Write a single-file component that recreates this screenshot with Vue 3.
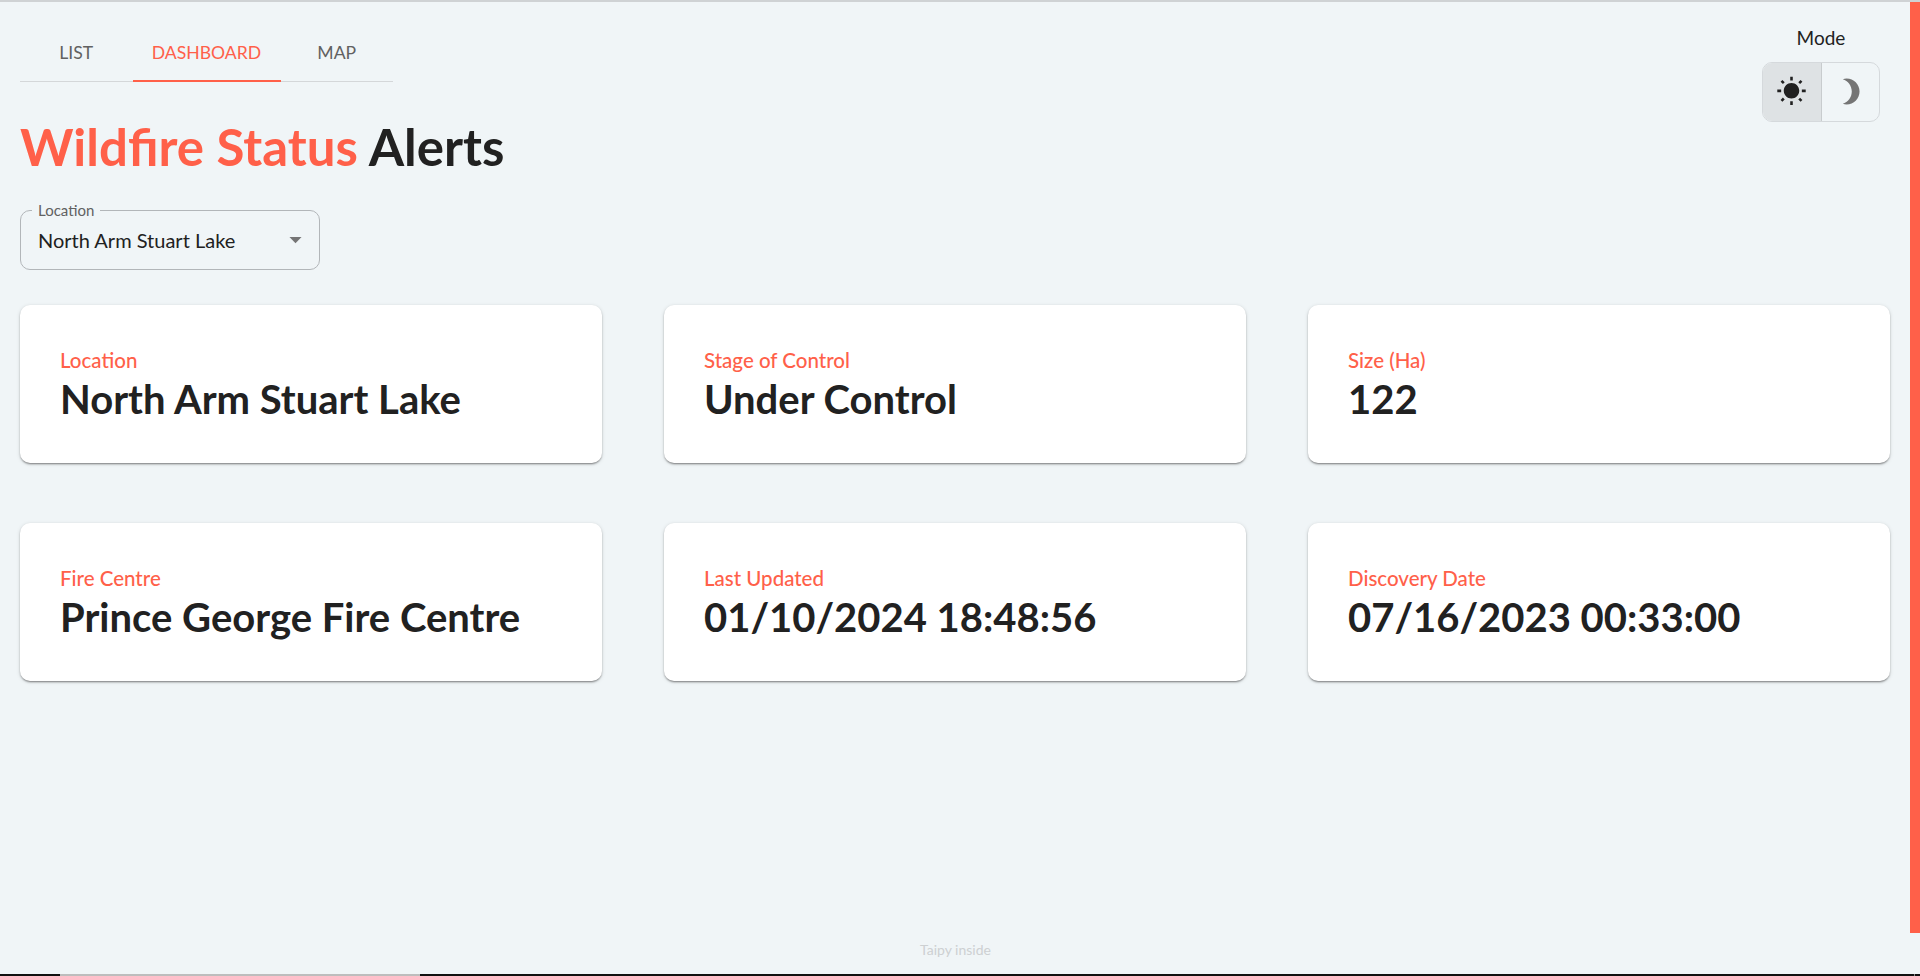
<script setup>
const tabs = [
  { label: 'LIST', active: false },
  { label: 'DASHBOARD', active: true },
  { label: 'MAP', active: false },
]

const cards = [
  { label: 'Location', value: 'North Arm Stuart Lake' },
  { label: 'Stage of Control', value: 'Under Control' },
  { label: 'Size (Ha)', value: '122' },
  { label: 'Fire Centre', value: 'Prince George Fire Centre' },
  { label: 'Last Updated', value: '01/10/2024 18:48:56' },
  { label: 'Discovery Date', value: '07/16/2023 00:33:00' },
]
</script>

<template>
  <div class="page">
    <div class="top-line"></div>

    <div class="mode">
      <span class="mode-label">Mode</span>
      <div class="mode-toggle">
        <button class="mode-btn selected">
          <svg width="31" height="31" viewBox="0 0 24 24" fill="#212121">
            <path d="M6.76 4.84l-1.8-1.79-1.41 1.41 1.79 1.79 1.42-1.41zM4 10.5H1v2h3v-2zm9-9.95h-2V3.5h2V.55zm7.45 3.91l-1.41-1.41-1.79 1.79 1.41 1.41 1.79-1.79zm-3.21 13.7l1.79 1.8 1.41-1.41-1.8-1.79-1.4 1.4zM20 10.5v2h3v-2h-3zm-8-5c-3.31 0-6 2.69-6 6s2.69 6 6 6 6-2.69 6-6-2.69-6-6-6zm-1 16.95h2V19.5h-2v2.95zm-7.45-3.91l1.41 1.41 1.79-1.8-1.41-1.41-1.79 1.8z" />
          </svg>
        </button>
        <button class="mode-btn">
          <svg width="31" height="31" viewBox="0 0 24 24" fill="#757575">
            <path d="M9 2c-1.05 0-2.05.16-3 .46 4.06 1.27 7 5.06 7 9.54 0 4.48-2.94 8.27-7 9.54.95.3 1.95.46 3 .46 5.52 0 10-4.48 10-10S14.52 2 9 2z" />
          </svg>
        </button>
      </div>
    </div>

    <div class="scroll-thumb"></div>

    <main class="content">
      <nav class="tabs">
        <a v-for="tab in tabs" :key="tab.label" class="tab" :class="{ active: tab.active }">{{ tab.label }}</a>
      </nav>

      <h1 class="title"><span class="accent">Wildfire Status</span> Alerts</h1>

      <fieldset class="select">
        <legend>Location</legend>
        <span class="select-value">North Arm Stuart Lake</span>
        <svg class="select-arrow" width="29" height="29" viewBox="0 0 24 24" fill="#757575">
          <path d="M7 10l5 5 5-5z" />
        </svg>
      </fieldset>

      <section class="grid">
        <div v-for="card in cards" :key="card.label" class="card">
          <div class="card-label">{{ card.label }}</div>
          <div class="card-value">{{ card.value }}</div>
        </div>
      </section>
    </main>

    <footer class="footer">Taipy inside</footer>

    <div class="bottom-bar">
      <div class="bottom-tab"></div>
      <div class="bottom-tick"></div>
    </div>
  </div>
</template>

<style>
html, body {
  margin: 0;
  background: #f0f5f7;
  overflow: hidden;
}
</style>

<style scoped>
.page {
  position: relative;
  width: 1920px;
  height: 976px;
  box-sizing: border-box;
  display: flex;
  flex-direction: column;
  background: #f0f5f7;
  color: #212121;
  font-family: Lato, "Liberation Sans", sans-serif;
  overflow: hidden;
}

.top-line {
  height: 2px;
  background: #cfd2d4;
  flex: none;
}

.content {
  flex: 1;
  padding: 18px 30px 0 20px;
}

.tabs {
  display: inline-flex;
  height: 62px;
  border-bottom: 1px solid #d4d7d9;
  box-sizing: border-box;
}

.tab {
  display: flex;
  align-items: center;
  justify-content: center;
  box-sizing: border-box;
  height: 62px;
  min-width: 112.5px;
  padding: 2px 20px 0;
  font-size: 17.6px;
  color: #616161;
}

.tab.active {
  width: 148px;
  padding-top: 4px;
  color: #ff6049;
  border-bottom: 2px solid #ff6049;
}

.title {
  margin: 29px 0 0;
  font-size: 51px;
  line-height: 72px;
  font-weight: 700;
  color: #212121;
}

.accent {
  color: #ff6049;
}

.select {
  position: relative;
  display: flex;
  align-items: center;
  box-sizing: border-box;
  width: 300px;
  height: 68px;
  margin: 19px 0 0;
  padding: 0 17px 8px;
  border: 1px solid #b2b6b9;
  border-radius: 10px;
}

.select legend {
  margin-left: -6px;
  padding: 0 6px;
  font-size: 15px;
  line-height: 16px;
  color: #616161;
}

.select-value {
  font-size: 20px;
  color: #212121;
}

.select-arrow {
  position: absolute;
  right: 9px;
  top: 7px;
}

.grid {
  display: grid;
  grid-template-columns: repeat(3, 582px);
  column-gap: 62px;
  row-gap: 60px;
  margin-top: 35px;
}

.card {
  height: 158px;
  box-sizing: border-box;
  padding: 43px 40px 0;
  background: #fff;
  border-radius: 10px;
  box-shadow: 0 2px 2px -1px rgba(0, 0, 0, 0.3), 0 1px 2px rgba(0, 0, 0, 0.18), 0 1px 4px rgba(0, 0, 0, 0.12);
}

.card-label {
  font-size: 20.5px;
  line-height: 24px;
  font-weight: 500;
  color: #ff6049;
}

.card-value {
  font-size: 40px;
  line-height: 54px;
  font-weight: 700;
  color: #212121;
}

.mode {
  position: absolute;
  top: 26px;
  right: 40px;
  display: flex;
  flex-direction: column;
  align-items: center;
  gap: 12px;
}

.mode-label {
  font-size: 19px;
  line-height: 24px;
  color: #212121;
}

.mode-toggle {
  display: flex;
  width: 118px;
  height: 60px;
  box-sizing: border-box;
  border: 1px solid #d5d9dc;
  border-radius: 10px;
  overflow: hidden;
}

.mode-btn {
  flex: 1;
  display: flex;
  align-items: center;
  justify-content: center;
  padding: 0 0 2px;
  border: 0;
  background: transparent;
}

.mode-btn.selected {
  background: #dee2e4;
  border-right: 1px solid #c8ccce;
}

.scroll-thumb {
  position: absolute;
  top: 2px;
  right: 0;
  width: 10px;
  height: 931px;
  background: #ff6049;
}

.footer {
  position: absolute;
  left: 920px;
  top: 941px;
  font-size: 14px;
  line-height: 18px;
  color: #cdd0d2;
}

.bottom-bar {
  position: relative;
  height: 2px;
  flex: none;
  background: #111;
}

.bottom-tab {
  width: 360px;
  height: 2px;
  margin-left: 60px;
  background: #bdbdbd;
}

.bottom-tick {
  position: absolute;
  top: 0;
  left: 1914px;
  width: 1px;
  height: 2px;
  background: #888;
}
</style>
